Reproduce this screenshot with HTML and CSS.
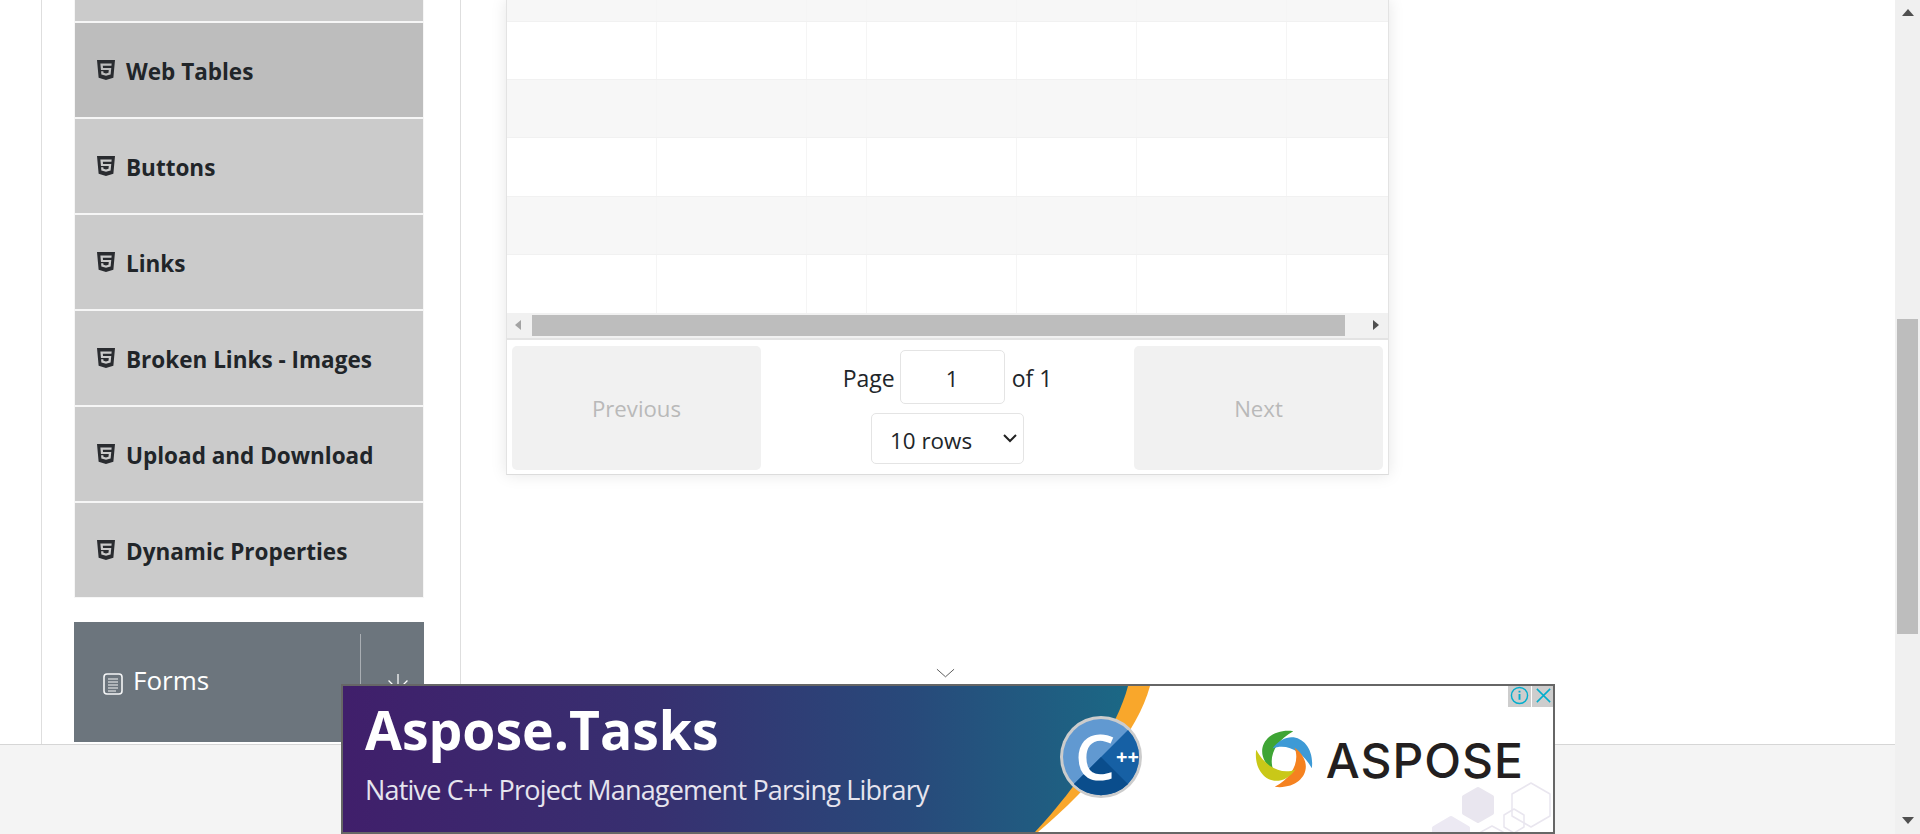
FILE: index.html
```html
<!DOCTYPE html>
<html lang="en">
<head>
  <meta charset="UTF-8" />
  <title>Web Tables</title>
  <link rel="stylesheet" href="styles.css">
</head>
<body>
  <svg class="icon-defs" width="0" height="0">
    <symbol id="html5" viewBox="0 32 384 448" preserveAspectRatio="none">
      <path d="M0 32l34.900 395.800L191.500 480l157.600-52.200L384 32H0zm308.200 127.900H124.400l4.100 49.400h175.600l-13.600 148.400-97.900 27v.3h-1.100l-98.700-27.300-6-75.800h47.700L138 320l53.500 14.500 53.700-14.500 6-62.200H84.300L71.500 112.200h241.100l-4.400 47.700z"/>
    </symbol>
  </svg>

  <div class="page">
    <div class="main">
      <!-- Left menu -->
      <div class="sidebar">
        <ul class="menu-list">
          <li class="menu-item menu-item-cut"></li>
          <li class="menu-item active"><svg class="html-icon"><use href="#html5"/></svg>Web Tables</li>
          <li class="menu-item"><svg class="html-icon"><use href="#html5"/></svg>Buttons</li>
          <li class="menu-item"><svg class="html-icon"><use href="#html5"/></svg>Links</li>
          <li class="menu-item"><svg class="html-icon"><use href="#html5"/></svg>Broken Links - Images</li>
          <li class="menu-item"><svg class="html-icon"><use href="#html5"/></svg>Upload and Download</li>
          <li class="menu-item"><svg class="html-icon"><use href="#html5"/></svg>Dynamic Properties</li>
        </ul>

        <div class="group-header">
          <div class="group-title">
            <svg class="group-icon" viewBox="0 0 20 22" fill="none" stroke="#f4f5f6">
              <rect x="1" y="1" width="18" height="20" rx="3" stroke-width="1.6"/>
              <path d="M5 6h10M5 9h10M5 12h10M5 15h10M5 18h8" stroke-width="1.2"/>
            </svg>
            <span>Forms</span>
          </div>
          <div class="group-toggle">
            <svg class="toggle-icon" viewBox="0 0 36 36" stroke="#fff" stroke-width="1.3">
              <path d="M18 1v12M18 24v12M0 18h12M24 18h12M8 8l6 6M22 22l6 6M28 8l-6 6M14 22l-6 6"/>
            </svg>
          </div>
        </div>
      </div>

      <!-- Table -->
      <div class="content">
        <div class="table-box">
          <div class="table-rows">
            <div class="table-row stripe row-cut"><i></i><i></i><i></i><i></i><i></i><i></i><i></i></div>
            <div class="table-row"><i></i><i></i><i></i><i></i><i></i><i></i><i></i></div>
            <div class="table-row stripe"><i></i><i></i><i></i><i></i><i></i><i></i><i></i></div>
            <div class="table-row"><i></i><i></i><i></i><i></i><i></i><i></i><i></i></div>
            <div class="table-row stripe"><i></i><i></i><i></i><i></i><i></i><i></i><i></i></div>
            <div class="table-row last"><i></i><i></i><i></i><i></i><i></i><i></i><i></i></div>
          </div>

          <div class="h-scroll">
            <span class="arrow-left"></span>
            <div class="h-thumb"></div>
            <span class="arrow-right"></span>
          </div>

          <div class="pagination">
            <button class="page-button" disabled>Previous</button>
            <div class="page-center">
              <div class="page-info">
                <span>Page</span>
                <div class="page-input">1</div>
                <span>of 1</span>
              </div>
              <div class="rows-select">
                <span>10 rows</span>
                <svg class="select-arrow" viewBox="0 0 16 16" fill="none" stroke="#222" stroke-width="2">
                  <path d="M2 5l6 6 6-6"/>
                </svg>
              </div>
            </div>
            <button class="page-button" disabled>Next</button>
          </div>
        </div>
      </div>
    </div>
    <div class="footer"></div>
  </div>

  <!-- Page scrollbar -->
  <div class="v-scroll">
    <span class="arrow-up"></span>
    <div class="v-thumb"></div>
    <span class="arrow-down"></span>
  </div>

  <!-- Ad banner -->
  <svg class="ad-handle" viewBox="0 0 20 10" fill="none" stroke="#555" stroke-width="1">
    <path d="M1 1l9 8 9-8"/>
  </svg>
  <div class="ad">
    <svg class="ad-art" viewBox="0 0 1210 146">
      <defs>
        <linearGradient id="adBlue" x1="0" y1="0" x2="1" y2="0">
          <stop offset="0" stop-color="#401f6b"/>
          <stop offset="0.4" stop-color="#373070"/>
          <stop offset="0.72" stop-color="#28497a"/>
          <stop offset="1" stop-color="#1b6885"/>
        </linearGradient>
      </defs>
      <path d="M0 0H807C795 45 750 100 695 146H0Z" fill="#f9a72b"/>
      <path d="M0 0H785C775 40 735 100 692 146H0Z" fill="url(#adBlue)"/>
      <g fill="#e9e6ef" stroke="#e9e6ef" stroke-width="4" stroke-linejoin="round">
        <polygon points="1135,103 1149,111 1149,127 1135,135 1121,127 1121,111"/>
        <polygon points="1108,132 1125,142 1125,163 1091,163 1091,142" fill="#ece9f3" stroke="#ece9f3"/>
      </g>
      <g fill="none" stroke="#e9e6ef" stroke-width="1.500" stroke-linejoin="round">
        <polygon points="1188,97 1207,108 1207,130 1188,141 1169,130 1169,108"/>
        <polygon points="1171,123 1181,129 1181,141 1171,147 1161,141 1161,129"/>
        <polygon points="1149,140 1160,146 1160,158 1138,158 1138,146"/>
      </g>
      <circle cx="758" cy="71" r="41" fill="#ccc"/>
      <circle cx="758" cy="71" r="38" fill="#6199d1"/>
      <path d="M785 44A38 38 0 0 1 731 98Z" fill="#1660a4"/>
      <path d="M758 71L785 98A38 38 0 0 1 731 98Z" fill="#0a4d8c"/>
      <text class="badge-c" x="752" y="94" text-anchor="middle">C</text>
      <text class="badge-plus" x="773" y="78">++</text>
    </svg>

    <div class="ad-copy">
      <div class="ad-title">Aspose.Tasks</div>
      <div class="ad-sub">Native C++ Project Management Parsing Library</div>
    </div>

    <div class="ad-brand">
      <svg class="swirl" viewBox="0 0 100 100">
        <path d="M66 2C18 -4 -8 40 32 70C22 46 36 18 66 2Z" fill="#3fa535"/>
        <path d="M66 2C18 -4 -8 40 32 70C22 46 36 18 66 2Z" fill="#3d9ad6" transform="rotate(90 50 50)"/>
        <path d="M66 2C18 -4 -8 40 32 70C22 46 36 18 66 2Z" fill="#f58220" transform="rotate(180 50 50)"/>
        <path d="M66 2C18 -4 -8 40 32 70C22 46 36 18 66 2Z" fill="#c9c818" transform="rotate(270 50 50)"/>
      </svg>
      <span class="brand-name">ASPOSE</span>
    </div>

    <div class="ad-buttons">
      <div class="ad-btn">
        <svg viewBox="0 0 20 20" fill="none" stroke="#00aecd" stroke-width="1.500">
          <circle cx="10" cy="10" r="8.500"/>
          <path d="M10 8.500v6M10 5v1.800" stroke-width="2"/>
        </svg>
      </div>
      <div class="ad-btn">
        <svg viewBox="0 0 20 20" fill="none" stroke="#00aecd" stroke-width="1.600">
          <path d="M3 3l14 14M17 3L3 17"/>
        </svg>
      </div>
    </div>
  </div>
</body>
</html>
```

FILE: styles.css
```css
* {
  margin: 0;
  padding: 0;
  box-sizing: border-box;
}

html, body {
  height: 100%;
  overflow: hidden;
}

body {
  display: flex;
  font-family: "Open Sans", sans-serif;
  color: #212529;
  background: #fff;
}

.icon-defs {
  position: absolute;
}

.page {
  flex: 1;
  display: flex;
  flex-direction: column;
  min-width: 0;
}

.main {
  flex: 1;
  display: flex;
  padding-left: 41px;
  min-height: 0;
}

.footer {
  height: 90px;
  background: #f4f4f4;
  border-top: 1px solid #d6d6d6;
}

/* sidebar */
.sidebar {
  width: 420px;
  padding-left: 32px;
  border-left: 1px solid #dedede;
  border-right: 1px solid #dedede;
}

.menu-list {
  width: 350px;
  list-style: none;
}

.menu-item {
  height: 96px;
  display: flex;
  align-items: center;
  padding: 2px 0 0 22px;
  background: #cbcbcb;
  border: 1px solid #f6f6f6;
  font-size: 22.5px;
  font-weight: 700;
}

.menu-item.active {
  background: #bdbdbd;
}

.menu-item-cut {
  height: 22px;
  border-top: 0;
}

.html-icon {
  width: 18px;
  height: 20px;
  margin-right: 11px;
  margin-top: -3px;
  fill: #2a2c30;
}

.group-header {
  width: 350px;
  height: 120px;
  margin-top: 24px;
  display: flex;
  background: #6c757d;
  color: #fff;
}

.group-title {
  flex: 1;
  display: flex;
  align-items: center;
  padding: 0 0 4px 29px;
  font-size: 26px;
}

.group-icon {
  width: 20px;
  height: 22px;
  margin-right: 10px;
  margin-top: 7px;
}

.group-toggle {
  width: 64px;
  margin-top: 12px;
  border-left: 1px solid #a9aeb3;
  padding: 39px 0 0 20px;
}

.toggle-icon {
  display: block;
  width: 34px;
  height: 34px;
}

/* table */
.content {
  flex: 1;
  padding-left: 45px;
}

.table-box {
  width: 883px;
  border-left: 1px solid #e3e3e3;
  border-right: 1px solid #e3e3e3;
  border-bottom: 1px solid #dcdcdc;
  box-shadow: 0 0 15px 0 rgba(0, 0, 0, 0.1);
  clip-path: inset(0 -20px -20px -20px);
}

.table-row {
  height: 58.2px;
  display: flex;
  border-bottom: 1px solid #f1f1f1;
  background: #fff;
}

.table-row.stripe {
  background: #f7f7f7;
}

.table-row.row-cut {
  height: 22px;
}

.table-row.last {
  border-bottom: 0;
}

.table-row i {
  width: 150px;
  border-right: 1px solid #f5f5f5;
}

.table-row i:nth-child(3) {
  width: 60px;
}

.table-row i:nth-child(5) {
  width: 120px;
}

.table-row i:last-child {
  flex: 1;
  border-right: 0;
}

.h-scroll {
  height: 25px;
  display: flex;
  align-items: center;
  background: #f1f1f1;
}

.h-thumb {
  height: 21px;
  flex: 1;
  background: #bdbdbd;
}

.arrow-left {
  flex: none;
  width: 0;
  height: 0;
  margin-left: 8px;
  margin-right: 11px;
  border: 5px solid transparent;
  border-left: 0;
  border-right: 6px solid #a3a3a3;
}

.arrow-right {
  flex: none;
  width: 0;
  height: 0;
  margin-left: 28px;
  margin-right: 9px;
  border: 5px solid transparent;
  border-right: 0;
  border-left: 6px solid #505050;
}

.pagination {
  display: flex;
  height: 136px;
  padding: 6px 5px 4px;
  border-top: 2px solid #e3e3e3;
  background: #fff;
}

.page-button {
  width: 249px;
  padding-top: 2px;
  border: 0;
  border-radius: 5px;
  background: #f1f1f1;
  color: #b9b9b9;
  font-family: inherit;
  font-size: 22.2px;
}

.page-center {
  flex: 1;
  display: flex;
  flex-direction: column;
  align-items: center;
  gap: 9px;
  padding-top: 4px;
}

.page-info {
  display: flex;
  align-items: center;
  gap: 6px;
  font-size: 23px;
}

.page-info span {
  padding-top: 2px;
}

.page-input {
  width: 105px;
  height: 54px;
  margin: 0 1px 0 -1px;
  display: flex;
  align-items: center;
  justify-content: center;
  padding-top: 2px;
  border: 1px solid #e4e4e4;
  border-radius: 5px;
  font-size: 22px;
}

.rows-select {
  width: 153px;
  height: 51px;
  display: flex;
  align-items: center;
  justify-content: space-between;
  padding: 4px 5px 0 18px;
  border: 1px solid #e4e4e4;
  border-radius: 5px;
  font-size: 22.4px;
}

.select-arrow {
  width: 16px;
  height: 16px;
  margin-top: -5px;
}

/* page scrollbar */
.v-scroll {
  width: 25px;
  flex: none;
  display: flex;
  flex-direction: column;
  align-items: center;
  background: #f0f0f0;
}

.v-thumb {
  width: 21px;
  height: 315px;
  margin-top: 303px;
  background: #bdbdbd;
}

.arrow-up {
  margin-top: 9px;
  width: 0;
  height: 0;
  border: 6px solid transparent;
  border-top: 0;
  border-bottom: 7px solid #505050;
}

.arrow-down {
  margin-top: auto;
  margin-bottom: 10px;
  width: 0;
  height: 0;
  border: 6px solid transparent;
  border-bottom: 0;
  border-top: 7px solid #505050;
}

/* ad */
.ad-handle {
  position: fixed;
  left: 936px;
  top: 668px;
  width: 19px;
  height: 10px;
}

.ad {
  position: fixed;
  left: 341px;
  bottom: 0;
  width: 1214px;
  height: 150px;
  border: 2px solid #666;
  background: #fff;
  overflow: hidden;
  display: flex;
  justify-content: space-between;
}

.ad-art {
  position: absolute;
  left: 0;
  top: 0;
  width: 1210px;
  height: 146px;
}

.ad-copy {
  position: relative;
  padding: 8px 0 0 22px;
  color: #fff;
}

.ad-title {
  font-size: 53.500px;
  font-weight: 700;
  line-height: 72px;
}

.ad-sub {
  font-size: 27px;
  letter-spacing: -0.8px;
  line-height: 36px;
  margin-top: 6px;
  color: #e6e4ee;
}

.badge-c {
  font-family: "Open Sans", sans-serif;
  font-size: 64px;
  font-weight: 600;
  fill: #fff;
}

.badge-plus {
  font-family: "Open Sans", sans-serif;
  font-size: 20px;
  font-weight: 700;
  fill: #fff;
}

.ad-brand {
  position: relative;
  display: flex;
  align-items: center;
  gap: 13px;
  padding: 2px 29px 0 0;
}

.swirl {
  width: 58px;
  height: 58px;
  margin-top: -3px;
}

.brand-name {
  font-family: "Inter", sans-serif;
  font-size: 48px;
  font-weight: 500;
  letter-spacing: 1px;
  color: #231f20;
}

.ad-buttons {
  position: absolute;
  right: -2px;
  top: -2px;
  display: flex;
  gap: 1px;
}

.ad-btn {
  width: 23px;
  height: 23px;
  padding: 2px;
  background: #cdcdcd;
}

.ad-btn svg {
  display: block;
  width: 19px;
  height: 19px;
}
```
